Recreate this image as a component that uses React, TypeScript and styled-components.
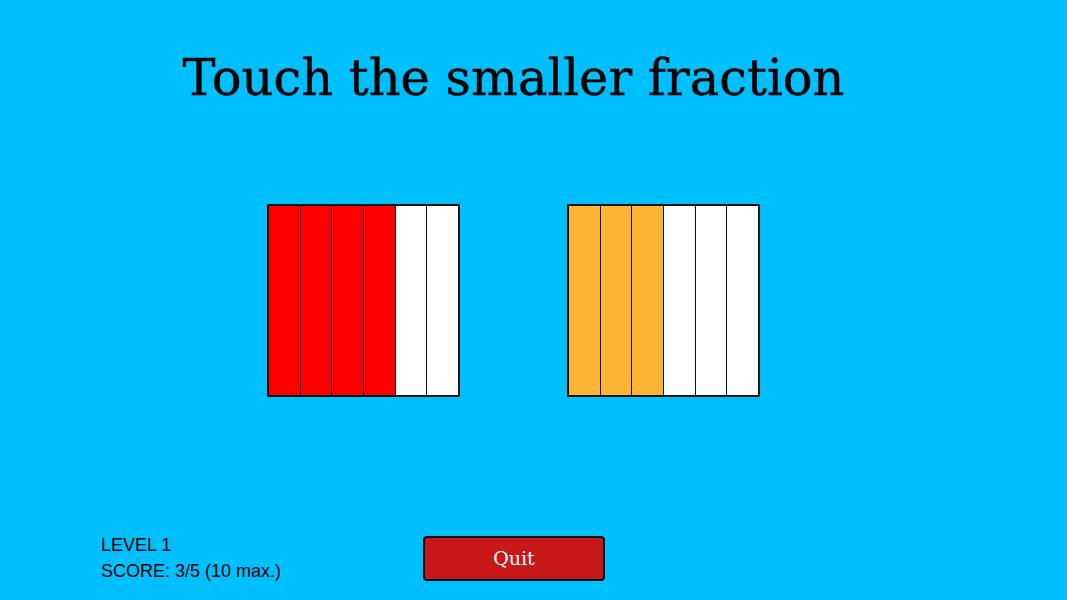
import React from 'react';
import styled, { createGlobalStyle } from 'styled-components';

const COLOR = {
  sky: '#00bfff',
  red: '#ff0000',
  orange: '#ffb533',
  white: '#ffffff',
  black: '#111111',
  quit: '#c8191a'
};

const GlobalStyle = createGlobalStyle`
  html, body {
    margin: 0;
    padding: 0;
    background: ${COLOR.sky};
  }
  body {
    width: 1067px;
    height: 600px;
    overflow: hidden;
  }
`;

const S = {
  Page: styled.div`
    display: flex;
    flex-direction: column;
    width: 1027px;
    height: 600px;
    background: ${COLOR.sky};
  `,
  Title: styled.h1`
    margin: 48px 0 0;
    height: 60px;
    font-family: 'DejaVu Serif', 'Liberation Serif', serif;
    font-size: 49.5px;
    font-weight: normal;
    line-height: 60px;
    text-align: center;
    color: #000;
    -webkit-text-stroke: 0.4px #000;
  `,
  Choices: styled.div`
    display: flex;
    justify-content: center;
    gap: 107px;
    margin-top: 96px;
  `,
  Bar: styled.div`
    display: flex;
    width: 193px;
    height: 193px;
    box-sizing: border-box;
    border: 2px solid ${COLOR.black};
    cursor: pointer;
  `,
  Cell: styled.div<{ $fill: string }>`
    flex: 1;
    background: ${(p) => p.$fill};
    & + & {
      border-left: 1.5px solid ${COLOR.black};
    }
  `,
  Footer: styled.div`
    display: flex;
    align-items: center;
    margin-top: auto;
    margin-bottom: 16px;
    padding-left: 101px;
  `,
  Stats: styled.div`
    width: 322px;
    font-family: 'Liberation Sans', Arial, sans-serif;
    font-size: 18px;
    line-height: 26px;
    color: #000;
  `,
  QuitButton: styled.button`
    width: 182px;
    height: 45px;
    box-sizing: border-box;
    border: 2px solid ${COLOR.black};
    border-radius: 4px;
    background: ${COLOR.quit};
    color: ${COLOR.white};
    font-family: 'DejaVu Serif', 'Liberation Serif', serif;
    font-size: 19px;
    cursor: pointer;
  `
};

const FractionBar = ({ parts, filled, color }: { parts: number; filled: number; color: string }) => (
  <S.Bar>
    {Array.from({ length: parts }, (_, i) => (
      <S.Cell key={i} $fill={i < filled ? color : COLOR.white} />
    ))}
  </S.Bar>
);

const App = () => (
  <>
    <GlobalStyle />
    <S.Page>
      <S.Title>Touch the smaller fraction</S.Title>
      <S.Choices>
        <FractionBar parts={6} filled={4} color={COLOR.red} />
        <FractionBar parts={6} filled={3} color={COLOR.orange} />
      </S.Choices>
      <S.Footer>
        <S.Stats>
          <div>LEVEL 1</div>
          <div>SCORE: 3/5 (10 max.)</div>
        </S.Stats>
        <S.QuitButton>Quit</S.QuitButton>
      </S.Footer>
    </S.Page>
  </>
);

export default App;
